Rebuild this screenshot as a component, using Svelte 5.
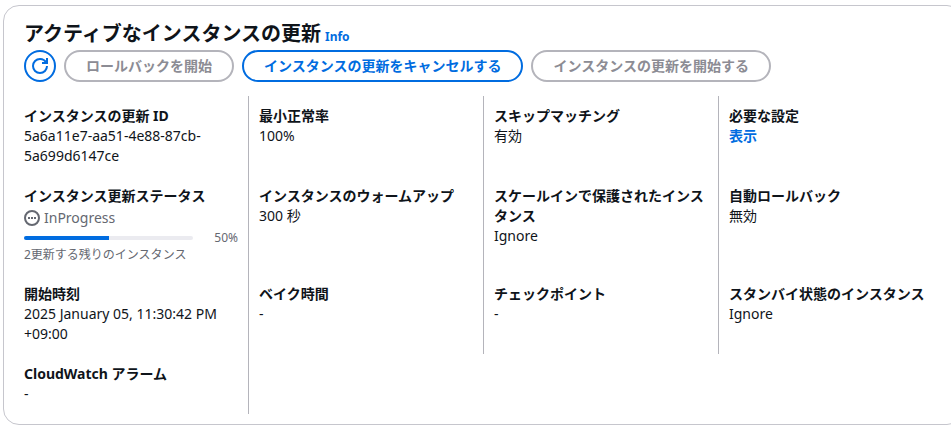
<script>
    const rows = [
        [
            { label: 'インスタンスの更新 ID', value: '5a6a11e7-aa51-4e88-87cb-5a699d6147ce' },
            { label: '最小正常率', value: '100%' },
            { label: 'スキップマッチング', value: '有効' },
            { label: '必要な設定', value: '表示', type: 'link' }
        ],
        [
            { label: 'インスタンス更新ステータス', value: 'InProgress', type: 'status' },
            { label: 'インスタンスのウォームアップ', value: '300 秒' },
            { label: 'スケールインで保護されたインスタンス', value: 'Ignore' },
            { label: '自動ロールバック', value: '無効' }
        ],
        [
            { label: '開始時刻', value: '2025 January 05, 11:30:42 PM +09:00' },
            { label: 'ベイク時間', value: '-' },
            { label: 'チェックポイント', value: '-' },
            { label: 'スタンバイ状態のインスタンス', value: 'Ignore' }
        ],
        [
            { label: 'CloudWatch アラーム', value: '-' }
        ]
    ];

    let progress = 50;
    let remaining = 2;
</script>

<main class="page">
    <section class="card">
        <header class="header">
            <div class="title">
                <h2>アクティブなインスタンスの更新</h2>
                <a class="info" href="#info">Info</a>
            </div>
            <div class="actions">
                <button class="btn icon-btn" aria-label="更新">
                    <svg viewBox="0 0 16 16" width="16" height="16" fill="none" stroke="currentColor" stroke-width="2">
                        <path d="M15 8c0 3.87-3.13 7-7 7s-7-3.13-7-7 3.13-7 7-7c2.79 0 5.2 1.63 6.33 4" />
                        <path d="M10 5h5V0" />
                    </svg>
                </button>
                <button class="btn" disabled>ロールバックを開始</button>
                <button class="btn">インスタンスの更新をキャンセルする</button>
                <button class="btn" disabled>インスタンスの更新を開始する</button>
            </div>
        </header>

        <div class="details">
            {#each rows as row}
                <dl class="row">
                    {#each row as item}
                        <div class="cell">
                            <dt>{item.label}</dt>
                            {#if item.type === 'link'}
                                <dd><a href="#settings">{item.value}</a></dd>
                            {:else if item.type === 'status'}
                                <dd class="status">
                                    <div class="state">
                                        <svg viewBox="0 0 16 16" width="16" height="16">
                                            <circle cx="8" cy="8" r="7" fill="none" stroke="currentColor" stroke-width="2" />
                                            <path d="M4 7h2v2H4zM7 7h2v2H7zM10 7h2v2h-2z" fill="currentColor" />
                                        </svg>
                                        <span>{item.value}</span>
                                    </div>
                                    <div class="progress">
                                        <progress value={progress} max="100" aria-label={item.label}></progress>
                                        <span class="percent">{progress}%</span>
                                    </div>
                                    <div class="remaining">{remaining}更新する残りのインスタンス</div>
                                </dd>
                            {:else}
                                <dd>{item.value}</dd>
                            {/if}
                        </div>
                    {/each}
                    {#if row.length === 1}
                        <div class="cell"></div>
                    {/if}
                </dl>
            {/each}
        </div>
    </section>
</main>

<style>
    :global(body) {
        background: #fff;
    }

    .page {
        overflow: hidden;
        padding: 5px 0 3px 3px;
        font-family: "Noto Sans", "Noto Sans CJK JP", sans-serif;
        font-size: 14px;
        line-height: 20px;
        color: #0f141a;
    }

    /* the panel runs past the right side of the window */
    .card {
        margin-right: -12px;
        padding: 14px 9px 10px;
        border: 1px solid #c6c6cd;
        border-radius: 16px;
    }

    .header {
        padding: 0 11px;
    }

    .title {
        display: flex;
        align-items: baseline;
        gap: 4px;
    }

    h2 {
        margin: 0;
        font-size: 20px;
        line-height: 28px;
        font-weight: 700;
    }

    a {
        color: #006ce0;
        font-weight: 700;
        text-decoration: none;
    }

    a:hover {
        text-decoration: underline;
    }

    .info {
        font-size: 12px;
    }

    .actions {
        display: flex;
        gap: 8px;
        margin-top: 2px;
    }

    .btn {
        box-sizing: border-box;
        height: 32px;
        padding: 0 20px;
        border: 2px solid #006ce0;
        border-radius: 16px;
        background: #fff;
        color: #006ce0;
        font-family: inherit;
        font-size: 14px;
        font-weight: 700;
        line-height: 20px;
        white-space: nowrap;
        cursor: pointer;
    }

    .btn:disabled {
        border-color: #b4b4bb;
        color: #8c8c94;
        cursor: default;
    }

    .icon-btn {
        display: flex;
        align-items: center;
        justify-content: center;
        width: 32px;
        padding: 0;
    }

    .details {
        margin-top: 14px;
    }

    .row {
        display: grid;
        grid-template-columns: repeat(4, minmax(0, 1fr));
        margin: 0;
    }

    .cell {
        padding: 10px;
        border-left: 1px solid #b4b4bb;
        overflow-wrap: anywhere;
    }

    .cell:first-child {
        border-left-color: transparent;
    }

    dt {
        font-weight: 700;
    }

    dd {
        margin: 0;
    }

    .status {
        color: #656871;
    }

    .state {
        display: flex;
        align-items: center;
        gap: 4px;
        height: 24px;
    }

    .progress {
        display: flex;
        align-items: center;
        height: 16px;
        font-size: 12px;
    }

    progress {
        flex: 1;
        min-width: 0;
        height: 4px;
        border: none;
        border-radius: 2px;
        overflow: hidden;
        appearance: none;
        background: #ebebf0;
    }

    progress::-webkit-progress-bar {
        background: #ebebf0;
    }

    progress::-webkit-progress-value {
        background: #006ce0;
    }

    .percent {
        width: 45px;
        text-align: right;
    }

    .remaining {
        font-size: 12px;
        line-height: 18px;
    }
</style>
